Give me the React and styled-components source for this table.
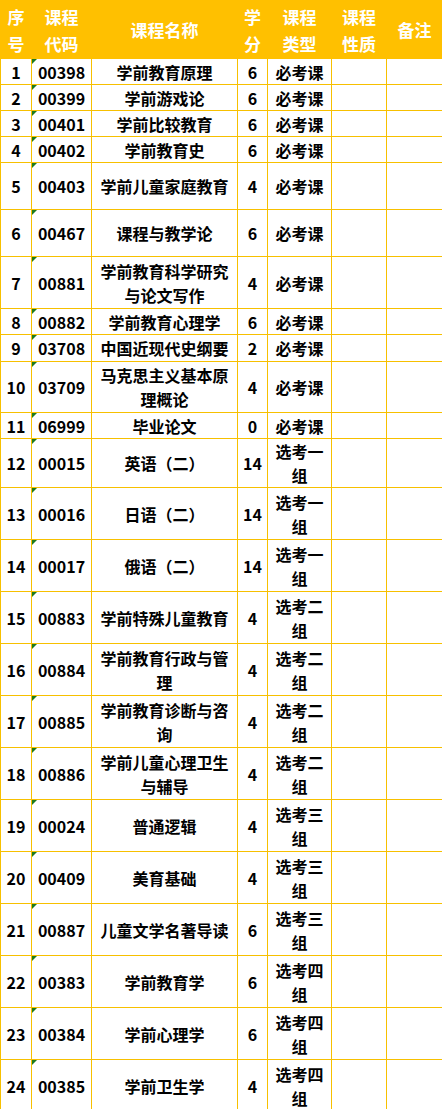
import React from "react";
import styled, { createGlobalStyle } from "styled-components";

const GlobalStyle = createGlobalStyle`
    body {
        margin: 0;
        background: #ffffff;
        font-family: "Noto Sans CJK SC", "Noto Sans", sans-serif;
    }
`;

const columns = [
    { label: ["序", "号"], width: 31 },
    { label: ["课程", "代码"], width: 60 },
    { label: ["课程名称"], width: 146 },
    { label: ["学", "分"], width: 30 },
    { label: ["课程", "类型"], width: 64 },
    { label: ["课程", "性质"], width: 55 },
    { label: ["备注"], width: 56 },
];

// 각 행 높이 (스크린샷 기준)
const courses = [
    ["1", "00398", "学前教育原理", "6", "必考课", 26],
    ["2", "00399", "学前游戏论", "6", "必考课", 26],
    ["3", "00401", "学前比较教育", "6", "必考课", 26],
    ["4", "00402", "学前教育史", "6", "必考课", 26],
    ["5", "00403", "学前儿童家庭教育", "4", "必考课", 47],
    ["6", "00467", "课程与教学论", "6", "必考课", 47],
    ["7", "00881", "学前教育科学研究与论文写作", "4", "必考课", 52],
    ["8", "00882", "学前教育心理学", "6", "必考课", 26],
    ["9", "03708", "中国近现代史纲要", "2", "必考课", 27],
    ["10", "03709", "马克思主义基本原理概论", "4", "必考课", 51],
    ["11", "06999", "毕业论文", "0", "必考课", 26],
    ["12", "00015", "英语（二）", "14", "选考一组", 46],
    ["13", "00016", "日语（二）", "14", "选考一组", 52],
    ["14", "00017", "俄语（二）", "14", "选考一组", 52],
    ["15", "00883", "学前特殊儿童教育", "4", "选考二组", 52],
    ["16", "00884", "学前教育行政与管理", "4", "选考二组", 52],
    ["17", "00885", "学前教育诊断与咨询", "4", "选考二组", 52],
    ["18", "00886", "学前儿童心理卫生与辅导", "4", "选考二组", 52],
    ["19", "00024", "普通逻辑", "4", "选考三组", 52],
    ["20", "00409", "美育基础", "4", "选考三组", 52],
    ["21", "00887", "儿童文学名著导读", "6", "选考三组", 52],
    ["22", "00383", "学前教育学", "6", "选考四组", 52],
    ["23", "00384", "学前心理学", "6", "选考四组", 52],
    ["24", "00385", "学前卫生学", "4", "选考四组", 52],
];

const App = () => {
    return (
        <>
            <GlobalStyle />
            <Table>
                <colgroup>
                    {columns.map((c, i) => (
                        <col key={i} style={{ width: c.width }} />
                    ))}
                </colgroup>
                <thead>
                    <HeadRow>
                        {columns.map((c, i) => (
                            <HeadCell key={i}>
                                {c.label.map((line, j) => (
                                    <HeadLine key={j}>{line}</HeadLine>
                                ))}
                            </HeadCell>
                        ))}
                    </HeadRow>
                </thead>
                <tbody>
                    {courses.map(([no, code, name, credit, type, h]) => (
                        <BodyRow key={no} $height={h}>
                            <Cell>{no}</Cell>
                            <CodeCell>
                                <TextMark />
                                {code}
                            </CodeCell>
                            <NameCell>{name}</NameCell>
                            <Cell>{credit}</Cell>
                            <TypeCell>{type}</TypeCell>
                            <Cell></Cell>
                            <Cell></Cell>
                        </BodyRow>
                    ))}
                </tbody>
            </Table>
        </>
    );
};

export default App;

const Table = styled.table`
    width: 442px;
    table-layout: fixed;
    border-collapse: collapse;
    font-family: "Noto Sans CJK SC", "Noto Sans", sans-serif;
`;

const HeadRow = styled.tr`
    height: 58px;
    background-color: #ffc000;
`;

const HeadCell = styled.th`
    padding: 0;
    color: #ffffff;
    font-size: 17px;
    font-weight: 700;
    line-height: 27px;
    text-align: center;
    vertical-align: middle;
    border: 1px solid #ffc000;
`;

const HeadLine = styled.div`
    white-space: nowrap;
`;

const BodyRow = styled.tr`
    height: ${(p) => p.$height}px;
`;

const Cell = styled.td`
    padding: 0 2px;
    border: 1px solid #f7c000;
    color: #000000;
    font-size: 16px;
    font-weight: 600;
    line-height: 24px;
    text-align: center;
    vertical-align: middle;
    word-break: break-all;
`;

const CodeCell = styled(Cell)`
    position: relative;
`;

const NameCell = styled(Cell)`
    padding: 0 4px;
`;

const TypeCell = styled(Cell)`
    padding: 0 6px;
`;

const TextMark = styled.span`
    position: absolute;
    left: 0;
    top: 0;
    width: 0;
    height: 0;
    border-top: 5px solid #1e7a1e;
    border-right: 5px solid transparent;
`;
